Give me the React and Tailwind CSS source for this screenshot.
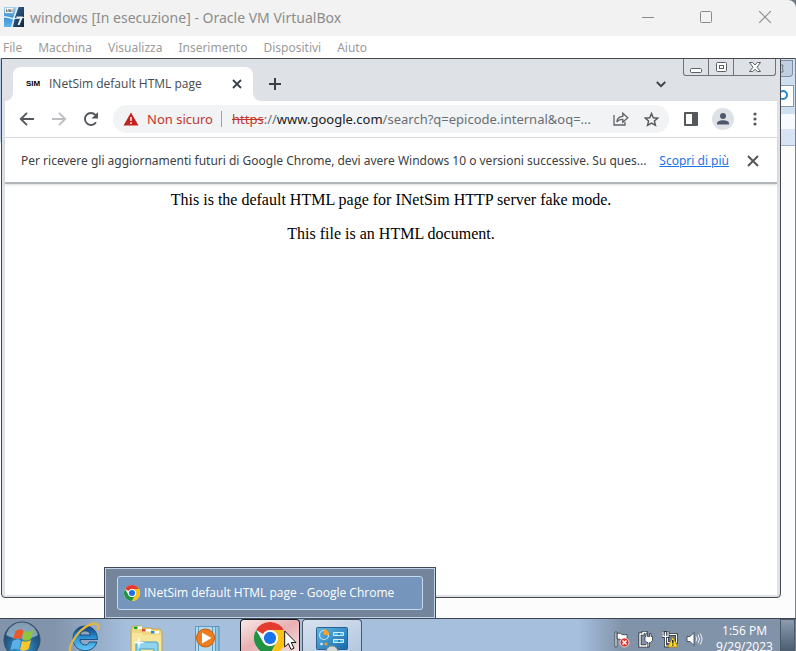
import React from "react";

function HostIcon() {
  return (
    <svg width="20" height="20" viewBox="0 0 20 20" className="shrink-0">
      <defs>
        <linearGradient id="host" x1="0" y1="0" x2="0" y2="1">
          <stop offset="0" stopColor="#a9d6f3" />
          <stop offset="0.5" stopColor="#3f90d6" />
          <stop offset="1" stopColor="#5db4ee" />
        </linearGradient>
        <linearGradient id="hostDark" x1="0" y1="0" x2="1" y2="1">
          <stop offset="0" stopColor="#3c6ea5" />
          <stop offset="1" stopColor="#0e2340" />
        </linearGradient>
      </defs>
      <rect width="20" height="20" fill="url(#host)" />
      <path d="M14 0h6v20H9l2-9z" fill="url(#hostDark)" />
      <path d="M0 9q5 .5 9 2l4-11h1.500l-4 11 9.500-1v1l-9.500 1L8.500 20H7l2-7.500Q5 11 0 10.500z" fill="#e6f6ff" />
      <path d="M1 1h8v5H1z" fill="#f1f1f1" />
      <path d="M2.500 2v3M4 5V3h1.500v2M6.500 5V2.500M8 2.500V5M4.500 2.500h1" stroke="#777" strokeWidth=".9" fill="none" />
      <path d="M12.500 10.500h5l-3 7.500" stroke="#f4f4f4" strokeWidth="2" fill="none" />
    </svg>
  );
}

function ChromeLogo({ size }) {
  return (
    <svg width={size} height={size} viewBox="0 0 48 48" className="shrink-0">
      <circle cx="24" cy="24" r="24" fill="#fff" />
      <path d="M3.2 12A24 24 0 0 1 44.8 12H24a12 12 0 0 0-10.4 6z" fill="#e33b2e" />
      <path d="M3.2 12A24 24 0 0 0 24 48l10.4-18A12 12 0 0 1 13.6 30z" fill="#229342" />
      <path d="M44.8 12A24 24 0 0 1 24 48l10.4-18A12 12 0 0 0 24 12z" fill="#fbc116" />
      <circle cx="24" cy="24" r="11.6" fill="#fff" />
      <circle cx="24" cy="24" r="9.2" fill="#1a73e8" />
    </svg>
  );
}

function Cross({ size, stroke, width }) {
  return (
    <svg width={size} height={size} viewBox="0 0 12 12">
      <path d="M1 1l10 10M11 1L1 11" stroke={stroke} strokeWidth={width} />
    </svg>
  );
}

function HostTitle() {
  return (
    <header className="flex h-9 shrink-0 items-center bg-[#f2f2f2] pb-0.5 pl-1 text-[#8c8c8c]">
      <HostIcon />
      <h1 className="flex-1 pl-1.5 font-['Noto_Sans',sans-serif] text-[14px]">
        windows [In esecuzione] - Oracle VM VirtualBox
      </h1>
      <button aria-label="Riduci" className="grid h-8 w-[58px] place-items-center">
        <svg width="12" height="12"><path d="M0 6.500h12" stroke="#8c8c8c" /></svg>
      </button>
      <button aria-label="Ingrandisci" className="grid h-8 w-[58px] place-items-center">
        <svg width="12" height="12"><rect x=".5" y=".5" width="11" height="11" rx="1" fill="none" stroke="#8c8c8c" /></svg>
      </button>
      <button aria-label="Chiudi" className="mr-px grid h-8 w-[60px] place-items-center">
        <Cross size={14} stroke="#8c8c8c" width="1" />
      </button>
    </header>
  );
}

function HostMenu() {
  return (
    <nav className="flex h-[22px] shrink-0 items-center gap-4 bg-white pl-[3px] pt-0.5 font-['Noto_Sans',sans-serif] text-[12px] text-[#9b9b9b]">
      {["File", "Macchina", "Visualizza", "Inserimento", "Dispositivi", "Aiuto"].map((m) => (
        <button key={m}>{m}</button>
      ))}
    </nav>
  );
}

function Captions() {
  return (
    <div className="mr-px flex h-[17px] rounded-b-[3px] border border-t-0 border-[#6f7379]">
      <button aria-label="Minimize" className="grid w-[25px] place-items-center border-r border-[#6f7379]">
        <svg width="13" height="13"><rect x=".5" y="7.500" width="11" height="4" rx="1" fill="#fff" stroke="#5b5f65" /></svg>
      </button>
      <button aria-label="Restore" className="grid w-[25px] place-items-center border-r border-[#6f7379]">
        <svg width="13" height="11" fill="#fff" stroke="#5b5f65">
          <rect x="1.500" y=".5" width="10" height="9" rx="1" />
          <rect x="4.500" y="3.500" width="4" height="3" />
        </svg>
      </button>
      <button aria-label="Close" className="grid w-[41px] place-items-center">
        <svg width="12" height="11" fill="#fff" stroke="#5b5f65">
          <path d="M.5.5h3.200L6 3l2.300-2.500h3.200L8 5.200l3.500 4.300H8.300L6 7.300 3.700 9.500H.5L4 5.200z" />
        </svg>
      </button>
    </div>
  );
}

function TabStrip() {
  return (
    <div className="flex h-[42px] items-end bg-[#dee1e6]">
      <div className="flex h-[34px] items-end">
        <svg width="8" height="8"><path d="M8 0v8H0a8 8 0 0 0 8-8" fill="#fff" /></svg>
        <div className="flex h-[34px] w-60 items-center rounded-t-lg bg-white pl-[13px] pr-2 text-[#45494d]">
          <span className="w-[23px] font-['Liberation_Sans',sans-serif] text-[8px] font-bold text-black">SIM</span>
          <span className="flex-1 font-['Open_Sans','Noto_Sans',sans-serif] text-[12px]">INetSim default HTML page</span>
          <button aria-label="Chiudi scheda" className="grid h-4 w-4 place-items-center">
            <svg width="10" height="10"><path d="M1 1l8 8M9 1L1 9" stroke="#3c4043" strokeWidth="1.800" /></svg>
          </button>
        </div>
        <svg width="8" height="8"><path d="M0 0v8h8a8 8 0 0 1-8-8" fill="#fff" /></svg>
      </div>
      <button aria-label="Nuova scheda" className="grid h-[34px] w-7 place-items-center">
        <svg width="12" height="12"><path d="M6 0v12M0 6h12" stroke="#3c4043" strokeWidth="2" /></svg>
      </button>
      <div className="flex-1" />
      <button aria-label="Cerca schede" className="grid h-[34px] w-7 place-items-center">
        <svg width="10" height="7" fill="none"><path d="M.8 1L5 5.200 9.200 1" stroke="#3c4043" strokeWidth="1.900" /></svg>
      </button>
      <div className="self-start pl-2">
        <Captions />
      </div>
    </div>
  );
}

function Toolbar() {
  return (
    <div className="flex h-[37px] items-center border-b border-[#dadce0] bg-white pl-1.5 pr-1.5">
      <button aria-label="Indietro" className="grid h-8 w-8 place-items-center">
        <svg width="16" height="14" fill="none" stroke="#54585d" strokeWidth="1.900"><path d="M15 7H2M8 .8L1.800 7 8 13.200" /></svg>
      </button>
      <button aria-label="Avanti" className="grid h-8 w-8 place-items-center">
        <svg width="16" height="14" fill="none" stroke="#bdbfc2" strokeWidth="1.900"><path d="M1 7h13M8 .8L14.200 7 8 13.200" /></svg>
      </button>
      <button aria-label="Ricarica" className="grid h-8 w-8 place-items-center">
        <svg width="16" height="16" viewBox="0 0 16 16">
          <path d="M13 11.200A6 6 0 1 1 12.300 3.800L14 5.500" fill="none" stroke="#54585d" strokeWidth="1.900" />
          <path d="M15 1v6.500H8.500z" fill="#54585d" />
        </svg>
      </button>
      <div className="ml-1.5 flex h-7 min-w-0 flex-1 items-center rounded-full bg-[#f1f3f4] pl-2.5 pr-1 text-[13px]">
        <svg width="16" height="14" className="shrink-0">
          <path d="M8 .5L15.500 13.500H.5z" fill="#c5221f" />
          <path d="M8 5v4M8 10.300v1.700" stroke="#fff" strokeWidth="1.400" />
        </svg>
        <span className="shrink-0 pl-2 pt-px text-[#c5352c]">Non sicuro</span>
        <span className="ml-2 h-4 w-px shrink-0 bg-[#9da0a4]" />
        <p className="min-w-0 flex-1 truncate pl-2.5 pt-px text-[#6b6f74]">
          <span className="text-[#c5352c] line-through">https</span>://<span className="text-[#202124]">www.google.com</span>/search?q=epicode.internal&amp;oq=...
        </p>
        <button aria-label="Condividi" className="grid h-7 w-8 shrink-0 place-items-center">
          <svg width="16" height="14" fill="none" stroke="#5f6368" strokeWidth="1.300">
            <path d="M1 3v10h11v-3" />
            <path d="M3.800 10C4.200 6.500 6.500 4.600 9.800 4.400V1.200L14.800 5.800l-5 4.400V7.300C7 7.300 5.200 8 3.800 10z" />
          </svg>
        </button>
        <button aria-label="Aggiungi ai preferiti" className="grid h-7 w-7 shrink-0 place-items-center">
          <svg width="15" height="15" viewBox="0 0 16 16" fill="none" stroke="#54585d" strokeWidth="1.500">
            <path d="M8 1.700l1.900 4.400 4.800.4-3.600 3.100 1.100 4.700L8 11.800l-4.200 2.500 1.100-4.700L1.300 6.500l4.800-.4z" />
          </svg>
        </button>
      </div>
      <button aria-label="Riquadro laterale" className="ml-1.5 grid h-8 w-8 place-items-center">
        <svg width="14" height="14"><rect width="14" height="14" rx="1" fill="#54585d" /><rect x="2" y="2" width="6" height="10" fill="#fff" /></svg>
      </button>
      <button aria-label="Profilo" className="grid h-8 w-8 place-items-center">
        <svg width="22" height="22"><circle cx="11" cy="11" r="11" fill="#dee1e6" /><circle cx="11" cy="8" r="3" fill="#4d586b" /><path d="M5 16.500v-1.300C5 13 9 12.200 11 12.200s6 .8 6 3v1.300z" fill="#4d586b" /></svg>
      </button>
      <button aria-label="Menu" className="grid h-8 w-8 place-items-center">
        <svg width="4" height="14" fill="#54585d"><circle cx="2" cy="2" r="1.600" /><circle cx="2" cy="7" r="1.600" /><circle cx="2" cy="12" r="1.600" /></svg>
      </button>
    </div>
  );
}

function InfoBar() {
  return (
    <div className="relative flex h-[46px] items-center border-b-2 border-[#b3b6b8] bg-white pl-4 pr-[18px] pt-0.5 text-[12px] text-[#3c4043] shadow-sm">
      <p className="min-w-0 flex-1 truncate">
        Per ricevere gli aggiornamenti futuri di Google Chrome, devi avere Windows 10 o versioni successive. Su ques...
      </p>
      <a href="#info" className="mr-[18px] shrink-0 text-[#1a73e8] underline">Scopri di più</a>
      <button aria-label="Chiudi avviso" className="grid shrink-0 place-items-center">
        <Cross size={12} stroke="#54585d" width="2" />
      </button>
    </div>
  );
}

function BrowserWindow() {
  return (
    <section className="ml-px flex min-w-0 flex-1 flex-col rounded-b border border-[#44474c] bg-[#dee1e6] px-[3px] pb-0.5 font-['Noto_Sans',sans-serif]">
      <TabStrip />
      <Toolbar />
      <InfoBar />
      <article className="flex-1 bg-white px-2 pt-[7px] text-center font-['Liberation_Serif',serif] text-[16px] leading-[18px] text-black">
        <p>This is the default HTML page for INetSim HTTP server fake mode.</p>
        <p className="pt-4">This file is an HTML document.</p>
      </article>
    </section>
  );
}

function BackgroundWindow() {
  return (
    <aside className="flex w-[15px] shrink-0 flex-col border-r border-[#7d8084] bg-[#fcfcfc]">
      <div className="h-14 border-t border-[#44474c] bg-[#cfdff0] pt-px">
        <div className="mr-0.5 h-[17px] rounded-br border border-l-0 border-[#7e8ea5] bg-[#c1cfe0]">
          <svg width="5" height="14" fill="none" stroke="#667587"><path d="M0 4h2v2L1 7l1 2v2H0" /></svg>
        </div>
        <div className="mr-px mt-2 flex h-[22px] items-center border border-l-0 border-[#8999ad] bg-white">
          <svg width="8" height="12" fill="none"><circle cx="2" cy="5" r="4" stroke="#2a85cd" strokeWidth="2" /></svg>
        </div>
      </div>
      <div className="h-8 border-b border-[#9fb3cf] bg-linear-to-b from-[#f7faff] from-50% to-[#d8e4f5] to-50%" />
    </aside>
  );
}

function StartOrb() {
  return (
    <svg width="38" height="38" viewBox="0 0 38 38">
      <defs>
        <radialGradient id="orb" cx=".5" cy=".75" r=".7">
          <stop offset="0" stopColor="#39a5d8" /><stop offset=".6" stopColor="#24608f" /><stop offset="1" stopColor="#1c3e60" />
        </radialGradient>
      </defs>
      <circle cx="19" cy="19" r="18" fill="url(#orb)" stroke="#344e68" />
      <path d="M3 14a16.500 16.500 0 0 1 32 0c-8 5-24 5-32 0" fill="#c8dbe8" opacity=".6" />
      <path d="M12.500 10q4.500-3 8-.5l-2 9q-4-2.500-8.500 0z" fill="#e8582b" />
      <path d="M21.500 10q4 2 9-1l-2.300 9q-5 3-8.700.8z" fill="#8cc63f" />
      <path d="M9.500 20q4.500-3 8.500-.5l-2.200 9q-4-2-8.500 1z" fill="#5baee8" />
      <path d="M19 20q4 2 9-1l-2.300 9q-5 3-8.700.8z" fill="#fcc72d" />
    </svg>
  );
}

function IeIcon() {
  return (
    <svg width="32" height="32" viewBox="0 0 32 32">
      <defs><linearGradient id="ie" x1="0" y1="0" x2="0" y2="1"><stop offset="0" stopColor="#123f78" /><stop offset=".5" stopColor="#2c94d8" /><stop offset="1" stopColor="#65c8f5" /></linearGradient></defs>
      <path d="M29.500 17.500H12c.3 6.500 8 7 9.300 2.500h7.500C26 32.500 5 31.500 5 16.500 5 0 29.500-.5 29.500 17.500zM12 13h10.300C22 7.500 12.700 7.500 12 13z" fill="url(#ie)" stroke="#0f3d70" strokeWidth=".8" />
      <path d="M3 31C-1 27 8 9 21 3c7-3 11-1 8.500 5" fill="none" stroke="#eab53c" strokeWidth="2.200" />
    </svg>
  );
}

function ExplorerIcon() {
  return (
    <svg width="34" height="32" viewBox="0 0 34 32">
      <path d="M2 5l2-4h8l1 2h9l1 1h8l2 3v25H2z" fill="#f0d77d" stroke="#c7a64a" />
      <path d="M5 1.500h8v2.500H5zM13 4h9v2.500h-9zM22 6h8v2.500h-8z" fill="#fff" />
      <path d="M5 1.500h3.500V4H5z" fill="#16a32c" /><path d="M13 4h3.500v2.500H13z" fill="#d8492f" /><path d="M22 6h3.500v2.500H22z" fill="#238fe0" />
      <path d="M3 8h9l2 2h18v22H3z" fill="#f7e59a" />
      <path d="M7 32V19q0-2 2-2h18q2 0 2 2v13h-4v-8H11v8z" fill="#8fd3ee" stroke="#4d9dc4" />
      <path d="M14 27h8v5h-8z" fill="#f5d968" stroke="#4d9dc4" />
      <path d="M10 11l1 5.500 5.500 1-5.500 1-1 5.500-1-5.500-5.500-1 5.500-1z" fill="#fff" />
    </svg>
  );
}

function MediaIcon() {
  return (
    <svg width="28" height="28" viewBox="0 0 28 28">
      <path d="M8 1.500h17v26H8z" fill="#8fc3df" stroke="#4f90b8" />
      <path d="M4.500 1.500h17v26h-17zM1.500 1.500h17v26h-17z" fill="#b5d8ea" stroke="#5d9cc0" />
      <circle cx="11.500" cy="13" r="9" fill="#ef7d1d" stroke="#c75c10" />
      <path d="M8 7.500v11l9.500-5.500z" fill="#fff" />
    </svg>
  );
}

function PanelIcon() {
  return (
    <svg width="34" height="30" viewBox="0 0 34 30">
      <defs><linearGradient id="panel" x1="0" y1="0" x2="1" y2="1"><stop offset="0" stopColor="#5fb7e4" /><stop offset="1" stopColor="#1769a8" /></linearGradient></defs>
      <rect x="1.500" y="1.500" width="31" height="22" rx="1" fill="url(#panel)" stroke="#27618d" />
      <circle cx="9" cy="9" r="4.500" fill="none" stroke="#c4e5f5" strokeWidth="1.200" />
      <path d="M9 9V3a6 6 0 0 1 5 6z" fill="#f7a128" />
      <path d="M18.500 6.500h10v3h-10zM18.500 13.500h10v3h-10z" fill="#4dbbe8" stroke="#d2effb" />
      <path d="M23 7.500h2v1h-2zM23 14.500h2v1h-2z" fill="#0d497b" />
      <circle cx="6.500" cy="18" r="1.300" fill="#d9edf8" /><circle cx="11" cy="18" r="1.500" fill="#f39b35" />
      <circle cx="17" cy="26" r="6" fill="#d4d6d8" stroke="#8a9197" />
    </svg>
  );
}

function FlagIcon() {
  return (
    <svg width="16" height="17" viewBox="0 0 16 17">
      <path d="M1 1h2v15H1zM3 2q4 0 5 1.500 3 .5 5 0V10q-3 .5-5-1-2-1-5-1z" fill="#fff" stroke="#333a42" strokeWidth=".8" />
      <circle cx="10.500" cy="11.500" r="4.500" fill="#d9362c" stroke="#fff" strokeWidth=".7" />
      <path d="M8.500 9.500l4 4M12.500 9.500l-4 4" stroke="#fff" strokeWidth="1.500" />
    </svg>
  );
}

function PowerIcon() {
  return (
    <svg width="16" height="17" viewBox="0 0 16 17" fill="none">
      <path d="M8 3V1.500H5V3H2v12h7v-2" stroke="#333a42" strokeWidth="3.200" />
      <path d="M8 3V1.500H5V3H2v12h7v-2" stroke="#fff" strokeWidth="1.400" />
      <path d="M8 2.500h1.500v3h2v-3H13v3h1.500v4l-2 2h-1V16H10v-4.500H9l-2-2v-4h1z" fill="#fff" stroke="#333a42" strokeWidth=".8" />
    </svg>
  );
}

function NetworkIcon() {
  return (
    <svg width="16" height="17" viewBox="0 0 16 17" fill="none">
      <path d="M5.500 3.500h9v8h-9z" fill="#6c7b8c" stroke="#333a42" strokeWidth="2.600" />
      <path d="M5.500 3.500h9v8h-9z" stroke="#fff" />
      <path d="M1 1h5v4.500H1zM3.500 5.500V15H7" stroke="#333a42" strokeWidth="2.800" />
      <path d="M1 .5v4.800h5V.5M3.500 1v14H7" stroke="#fff" strokeWidth="1.200" />
      <path d="M10.800 6l5 10H5.800z" fill="#ffd91f" stroke="#a8800e" strokeWidth=".7" />
      <path d="M10.800 9v3.500M10.800 13.500v1.300" stroke="#222" strokeWidth="1.400" />
    </svg>
  );
}

function SoundIcon() {
  return (
    <svg width="17" height="16" viewBox="0 0 17 16">
      <path d="M1 5.500h3L8 1.500v13l-4-4H1z" fill="#fff" stroke="#3e4751" strokeWidth=".9" />
      <path d="M10 5.500q1.500 2.500 0 5M12 3.800q3 4.200 0 8.400M14 2.500q4 5.500 0 11" fill="none" stroke="#f2f5f8" />
    </svg>
  );
}

function Taskbar() {
  const slot = "flex h-full shrink-0 items-start justify-center overflow-hidden";
  return (
    <footer className="relative flex h-[33px] shrink-0 border-t border-[#3b4450] bg-linear-to-r from-[#8294ab] from-7% via-[#a5bfdd] via-16% to-[#a5bfdd] to-75% font-['Open_Sans','Noto_Sans',sans-serif]">
      <button aria-label="Start" className={slot + " w-11 pt-0.5"}><StartOrb /></button>
      <div className="w-[17px]" />
      <button aria-label="Internet Explorer" className={slot + " w-[45px] pt-[3px]"}><IeIcon /></button>
      <div className="w-[17px]" />
      <button aria-label="Windows Explorer" className={slot + " w-[46px] pt-1.5"}><ExplorerIcon /></button>
      <div className="w-4" />
      <button aria-label="Media Player" className={slot + " w-[46px] pt-1.5"}><MediaIcon /></button>
      <div className="w-[9px]" />
      <button aria-label="Google Chrome" className={slot + " w-[60px] rounded-t-sm border border-b-0 border-[#16191d] bg-linear-to-br from-[#f7e9ea] via-[#e9b0b2] to-[#f6dfe1] pt-0.5"}>
        <ChromeLogo size={32} />
      </button>
      <button aria-label="Control Panel" className={slot + " ml-0.5 w-[60px] rounded-t-sm border border-b-0 border-[#4b5868] bg-linear-to-br from-[#d8e2ef] to-[#b4c8e0] pt-1.5"}>
        <PanelIcon />
      </button>
      <div className="flex flex-1 justify-end bg-linear-to-r from-transparent from-50% to-[#8193a9] to-60% text-white">
        <div className="flex items-start gap-2 pt-3">
          <FlagIcon /><PowerIcon /><NetworkIcon /><SoundIcon />
        </div>
        <div className="w-[77px] pl-1.5 pt-1 text-center text-[12px] leading-4">
          <p>1:56 PM</p>
          <p>9/29/2023</p>
        </div>
        <button aria-label="Show desktop" className="w-[15px] border border-b-0 border-[#4a5a6c] bg-linear-to-b from-[#8c9cae] to-[#4c5d70]" />
        <div className="w-px bg-[#7d8084]" />
      </div>
      <svg width="13" height="21" viewBox="0 0 13 21" className="absolute left-[284px] top-[11px]">
        <path d="M.7 1v16l3.700-3.500 2.600 6 3-1.300-2.700-5.700h4.700z" fill="#fff" stroke="#111" />
      </svg>
      <div className="absolute bottom-8 left-[104px] w-[332px] border border-[#3e4a59] bg-[#74859b]">
        <div className="border border-[#c0d4e6] px-[11px] py-[7px]">
          <button className="flex h-[34px] w-full items-center gap-1 rounded-[3px] border border-[#c5d9ee] bg-[#7595bc] pl-1.5 text-[12px] text-white">
            <ChromeLogo size={16} />
            INetSim default HTML page - Google Chrome
          </button>
        </div>
      </div>
    </footer>
  );
}

export default function App() {
  return (
    <div className="flex h-screen flex-col overflow-hidden bg-[#6d7883]">
      <div className="shrink-0 overflow-hidden rounded-tr-lg">
        <HostTitle />
        <HostMenu />
      </div>
      <main className="flex min-h-0 flex-1 flex-col bg-[#fcfcfc]">
        <div className="flex min-h-0 flex-1 bg-linear-to-b from-[#b9cde4] from-0% via-[#b9cde4] via-15% to-[#fcfcfc] to-16%">
          <BrowserWindow />
          <BackgroundWindow />
        </div>
        <div className="h-5 shrink-0 border-r border-[#7d8084] bg-[#fcfcfc]" />
      </main>
      <Taskbar />
    </div>
  );
}
